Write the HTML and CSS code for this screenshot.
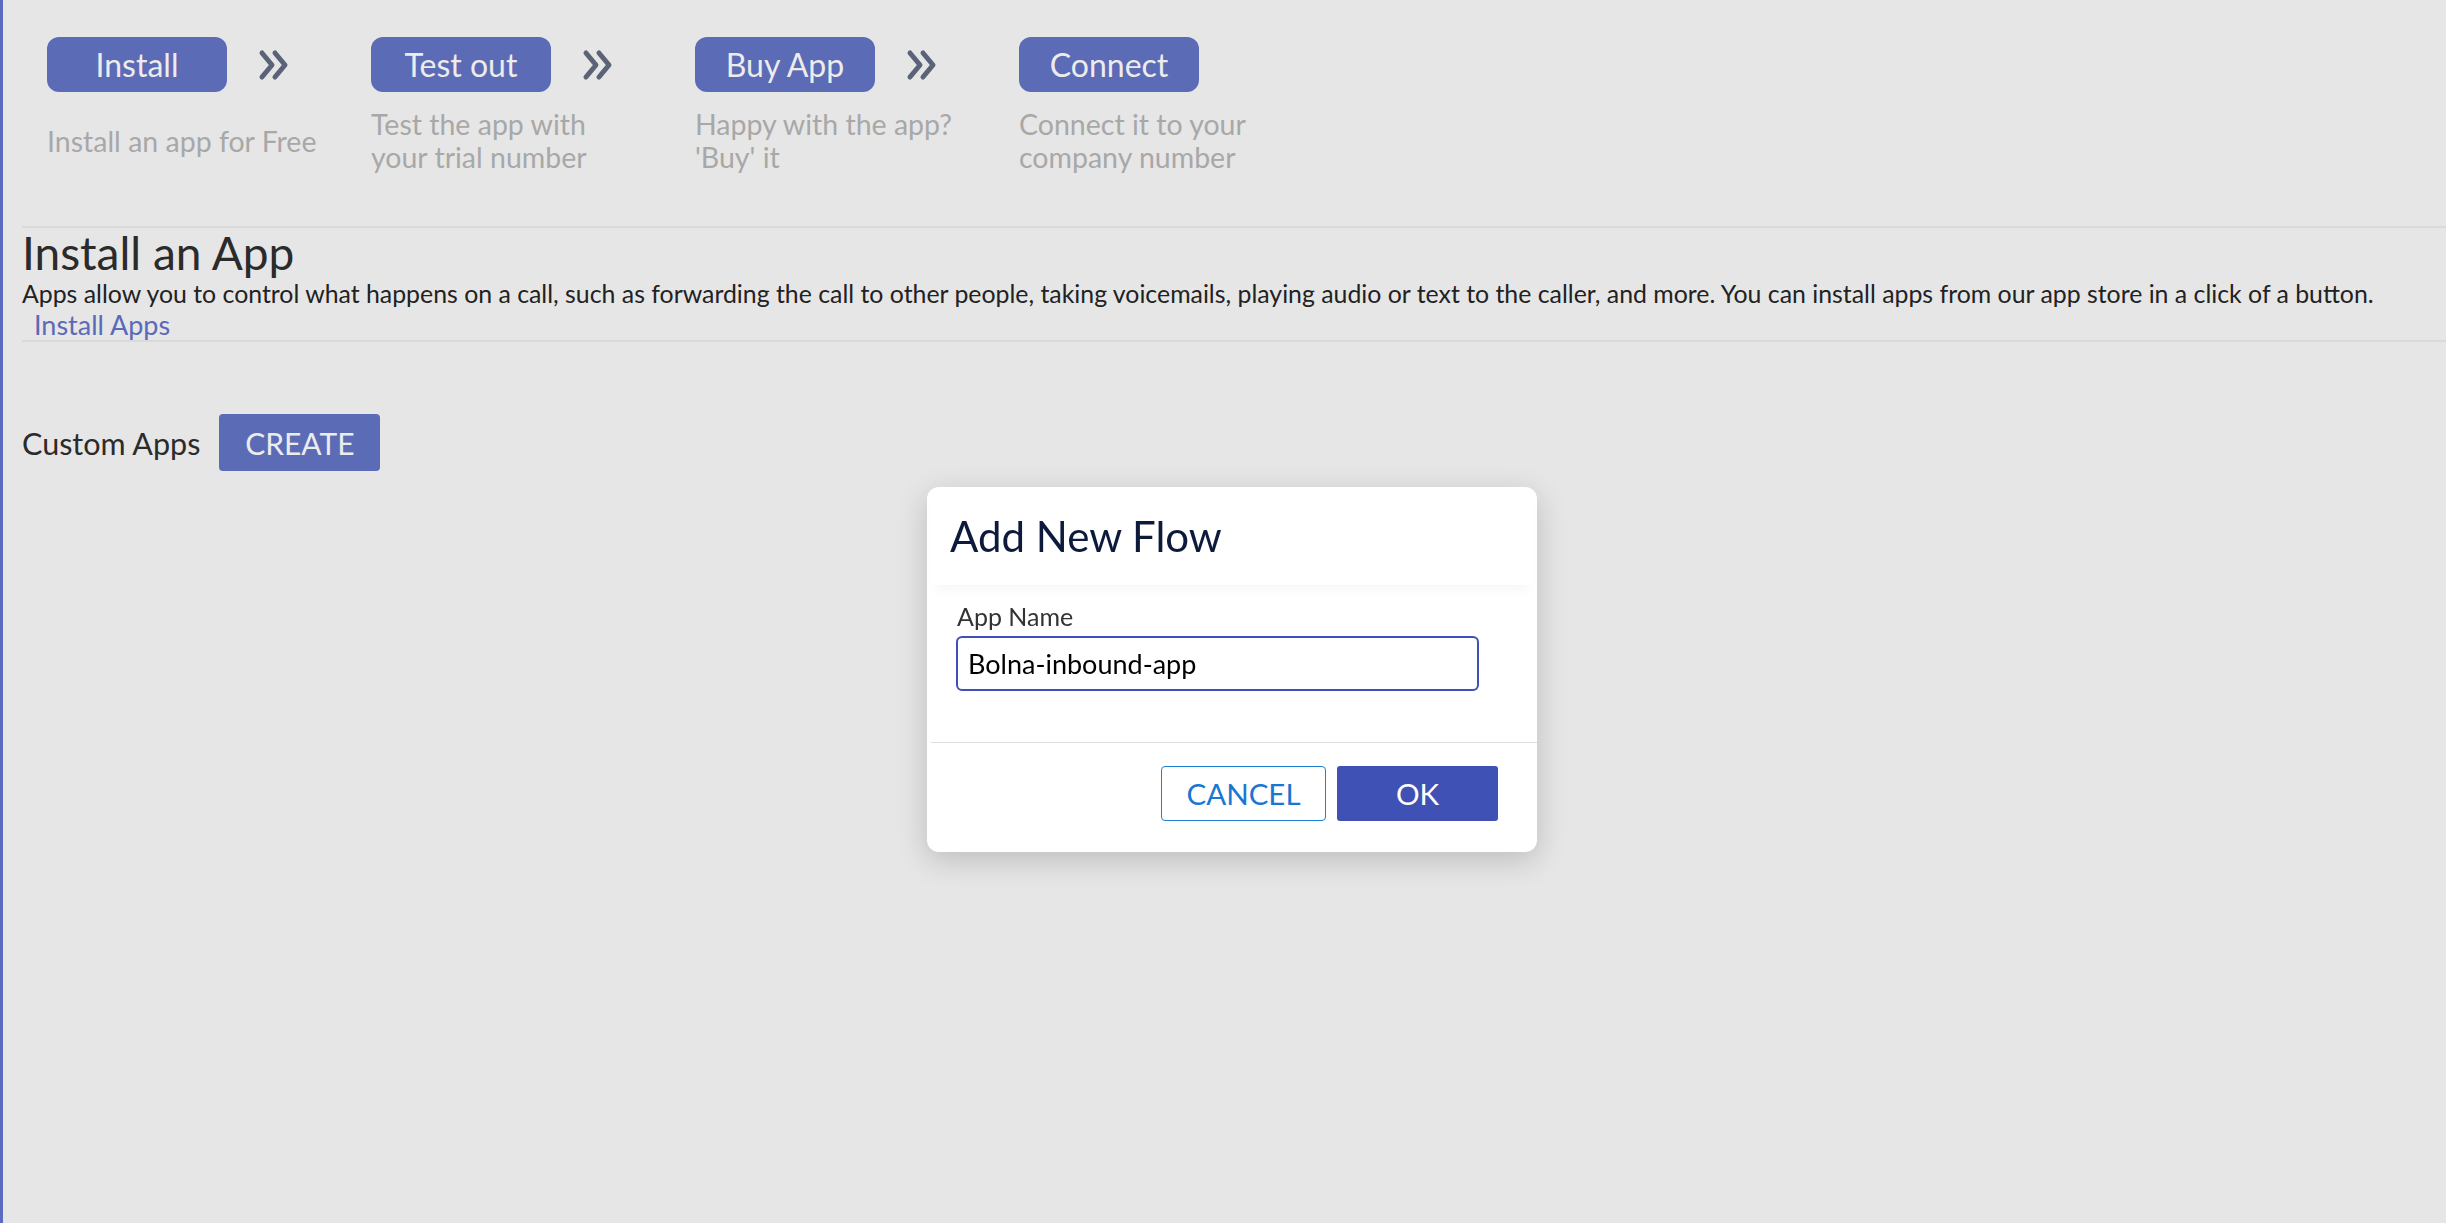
FILE: index.html
```html
<!DOCTYPE html>
<html lang="en">
<head>
    <meta charset="UTF-8">
    <meta name="viewport" content="width=device-width, initial-scale=1.0">
    <title>Apps</title>
    <link rel="stylesheet" href="styles.css">
</head>
<body>
    <div class="page">
        <div class="steps">
            <div class="step">
                <div class="step-head">
                    <span class="step-btn">Install</span>
                    <svg class="chevron" viewBox="0 0 33 32"><polyline points="4,4 14,16 4,28"/><polyline points="17,4 27,16 17,28"/></svg>
                </div>
                <div class="step-desc">Install an app for Free</div>
            </div>
            <div class="step">
                <div class="step-head">
                    <span class="step-btn">Test out</span>
                    <svg class="chevron" viewBox="0 0 33 32"><polyline points="4,4 14,16 4,28"/><polyline points="17,4 27,16 17,28"/></svg>
                </div>
                <div class="step-desc">Test the app with<br>your trial number</div>
            </div>
            <div class="step">
                <div class="step-head">
                    <span class="step-btn">Buy App</span>
                    <svg class="chevron" viewBox="0 0 33 32"><polyline points="4,4 14,16 4,28"/><polyline points="17,4 27,16 17,28"/></svg>
                </div>
                <div class="step-desc">Happy with the app?<br>'Buy' it</div>
            </div>
            <div class="step">
                <div class="step-head">
                    <span class="step-btn">Connect</span>
                </div>
                <div class="step-desc">Connect it to your<br>company number</div>
            </div>
        </div>

        <div class="info">
            <h1>Install an App</h1>
            <p>Apps allow you to control what happens on a call, such as forwarding the call to other people, taking voicemails, playing audio or text to the caller, and more. You can install apps from our app store in a click of a button.</p>
            <a href="#" class="info-link">Install Apps</a>
        </div>

        <div class="custom-apps">
            <span>Custom Apps</span>
            <button class="create-btn">CREATE</button>
        </div>
    </div>

    <div class="backdrop">
        <div class="dialog">
            <div class="dialog-header">Add New Flow</div>
            <div class="dialog-body">
                <label for="appName">App Name</label>
                <input type="text" id="appName" value="Bolna-inbound-app">
            </div>
            <div class="dialog-footer">
                <button class="btn-cancel">CANCEL</button>
                <button class="btn-ok">OK</button>
            </div>
        </div>
    </div>
</body>
</html>
```

FILE: styles.css
```css
* {
    margin: 0;
    padding: 0;
    box-sizing: border-box;
    font-family: Lato, "Open Sans", sans-serif;
}

body {
    background-color: #e6e6e6;
    color: #222;
    min-height: 100vh;
}

.page {
    min-height: 100vh;
    border-left: 3px solid #5c6bc0;
}

/* steps row */
.steps {
    display: flex;
    padding: 37px 0 0 44px;
}

.step {
    width: 324px;
    display: flex;
    flex-direction: column;
}

.step-head {
    display: flex;
    align-items: center;
}

.step-btn {
    width: 180px;
    height: 55px;
    border-radius: 12px;
    background-color: #5c6bb5;
    color: #ececec;
    font-size: 32px;
    display: flex;
    justify-content: center;
    align-items: center;
}

.chevron {
    width: 33px;
    height: 32px;
    margin-left: 31px;
    fill: none;
    stroke: #5a6377;
    stroke-width: 5;
    stroke-linecap: round;
    stroke-linejoin: round;
}

.step-desc {
    margin-top: 16px;
    height: 66px;
    display: flex;
    align-items: center;
    font-size: 28.5px;
    line-height: 33px;
    color: #a8a8a8;
}

/* info box */
.info {
    margin: 52px 0 0 19px;
    border-top: 2px solid #dadada;
    border-bottom: 2px solid #dadada;
}

.info h1 {
    font-size: 46px;
    font-weight: normal;
    line-height: 50px;
    color: #2b2b2b;
}

.info p {
    font-size: 24.85px;
    line-height: 31px;
    color: #222;
}

.info-link {
    display: inline-block;
    margin-left: 12px;
    font-size: 27px;
    line-height: 31px;
    color: #5b6ab8;
    text-decoration: none;
}

.custom-apps {
    display: flex;
    align-items: center;
    gap: 19px;
    margin: 72px 0 0 19px;
    font-size: 30.5px;
    color: #2b2b2b;
}

.create-btn {
    width: 161px;
    height: 57px;
    border: none;
    border-radius: 4px;
    background-color: #5c6bb5;
    color: #ececec;
    font-size: 30px;
}

/* dialog */
.backdrop {
    position: fixed;
    top: 0;
    left: 0;
    right: 0;
    bottom: 0;
}

.dialog {
    position: absolute;
    left: 927px;
    top: 487px;
    width: 610px;
    height: 365px;
    background-color: #fff;
    border-radius: 12px;
    box-shadow: 0 8px 30px rgba(0, 0, 0, 0.18);
    display: flex;
    flex-direction: column;
}

.dialog-header {
    height: 98px;
    margin: 0 4px;
    padding-left: 19px;
    display: flex;
    align-items: center;
    font-size: 42px;
    color: #0d1a3b;
    box-shadow: 0 8px 12px -4px rgba(0, 0, 0, 0.04);
}

.dialog-body {
    display: flex;
    flex-direction: column;
    gap: 6px;
    padding: 17px 0 0 29px;
    height: 158px;
    margin-left: 4px;
    border-bottom: 1px solid #dedede;
}

.dialog-body label {
    font-size: 25px;
    line-height: 28px;
    color: #333;
    margin-left: -3px;
}

.dialog-body input {
    width: 523px;
    height: 55px;
    border: 2px solid #3f51b5;
    border-radius: 6px;
    padding-left: 10px;
    font-size: 27px;
    color: #000;
    outline: none;
    margin-left: -4px;
}

.dialog-footer {
    display: flex;
    justify-content: flex-end;
    gap: 11px;
    padding: 23px 39px 0 0;
}

.btn-cancel {
    width: 165px;
    height: 55px;
    background-color: #fff;
    border: 1px solid #1e7fd0;
    border-radius: 4px;
    color: #1976d2;
    font-size: 29.5px;
}

.btn-ok {
    width: 161px;
    height: 55px;
    background-color: #3f51b5;
    border: none;
    border-radius: 3px;
    color: #fff;
    font-size: 29.5px;
}
```
